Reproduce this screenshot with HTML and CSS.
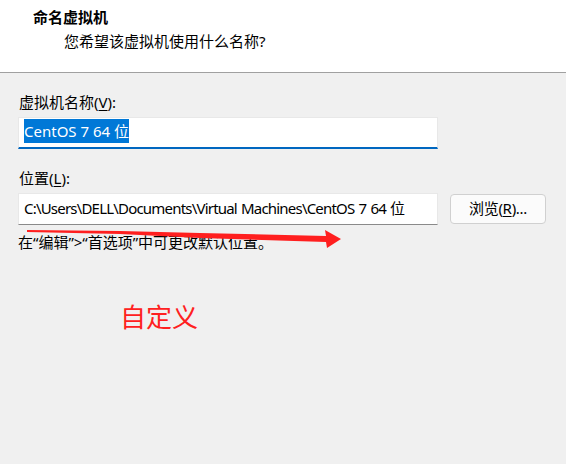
FILE: index.html
```html
<!DOCTYPE html>
<html lang="zh-CN">
<head>
  <meta charset="UTF-8" />
  <title>新建虚拟机向导</title>
  <link rel="stylesheet" href="styles.css">
</head>
<body>
  <div class="wizard">
    <header class="head">
      <h1 class="title">命名虚拟机</h1>
      <p class="subtitle">您希望该虚拟机使用什么名称?</p>
    </header>

    <main class="content">
      <label class="field-label" for="vmName">虚拟机名称(<u>V</u>):</label>
      <div class="row">
        <div class="input input-active" id="vmName">
          <span class="selected">CentOS 7 64 位</span>
        </div>
      </div>

      <label class="field-label second" for="vmPath">位置(<u>L</u>):</label>
      <div class="row">
        <div class="input path" id="vmPath">C:\Users\DELL\Documents\Virtual Machines\CentOS 7 64 位</div>
        <button class="browse">浏览(<u>R</u>)...</button>
      </div>

      <p class="hint">在“编辑”&gt;“首选项”中可更改默认位置。</p>

      <p class="note">自定义</p>
    </main>

    <svg class="arrow" viewBox="0 0 566 464" width="566" height="464" aria-hidden="true">
      <polygon fill="#ff1f1f" points="27,230 120,231 200,233 326,236 325,230 341,239 327,248 326,242 200,238 120,234 27,232" />
    </svg>
  </div>
</body>
</html>
```

FILE: styles.css
```css
* {
  box-sizing: border-box;
}

html,
body {
  margin: 0;
  height: 100%;
}

body {
  background: #f0f0f0;
  color: #000;
  font-family: "Noto Sans", "Noto Sans CJK SC", sans-serif;
  font-size: 15px;
}

.wizard {
  position: relative;
  height: 100%;
}

.head {
  height: 73px;
  background: #fff;
  border-bottom: 1px solid #a0a0a0;
  padding-top: 7px;
}

.title {
  margin: 0;
  padding-left: 33px;
  font-size: 15px;
  font-weight: bold;
  line-height: 20px;
}

.subtitle {
  margin: 4px 0 0;
  padding-left: 64px;
  line-height: 20px;
}

.content {
  padding: 19px 20px 0 18px;
}

.field-label {
  display: block;
  padding-left: 1px;
  line-height: 20px;
}

.field-label.second {
  margin-top: 19px;
}

u {
  text-decoration-thickness: 1px;
  text-underline-offset: 2px;
}

.row {
  display: flex;
  align-items: center;
  gap: 12px;
  margin-top: 5px;
}

.input {
  width: 420px;
  height: 32px;
  padding: 0 5px 3px;
  background: #fff;
  border: 1px solid #e8e8e8;
  border-bottom: 1px solid #8a8a8a;
  display: flex;
  align-items: center;
  white-space: nowrap;
  overflow: hidden;
  line-height: 20px;
}

.input-active {
  border-bottom: 2px solid #0067c0;
}

.path {
  letter-spacing: -0.8px;
  word-spacing: 1px;
}

.selected {
  background: #0078d7;
  color: #fff;
  padding: 2px 0;
}

.browse {
  width: 96px;
  height: 30px;
  padding: 0 0 2px;
  background: #fbfbfb;
  border: 1px solid #d0d0d0;
  border-radius: 4px;
  font: inherit;
  letter-spacing: -0.3px;
  line-height: 20px;
  color: #000;
}

.hint {
  margin: 7px 0 0;
  line-height: 20px;
}

.note {
  margin: 50px 0 0 102px;
  color: #ff2020;
  font-size: 26px;
  line-height: 30px;
}

.arrow {
  position: absolute;
  left: 0;
  top: 0;
  pointer-events: none;
}
```
